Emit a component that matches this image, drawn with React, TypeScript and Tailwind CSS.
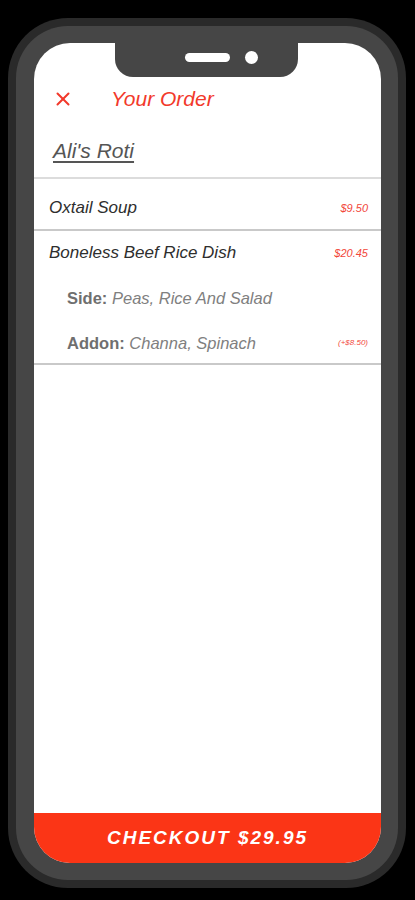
import { X } from "lucide-react";

const font = { fontFamily: "'Liberation Sans', Arial, sans-serif" };

type Line = { label: string; value: string };

interface OrderItemProps {
  name: string;
  price: string;
  lines?: Line[];
  extra?: string;
}

// one item in the order, with optional side / addon lines
const OrderItem = ({ name, price, lines = [], extra }: OrderItemProps) => (
  <div className="flex flex-col border-b-2 border-[#c9c9c9] pb-[8px]">
    <div className="flex h-[24px] items-center justify-between pl-[15px] pr-[13px]">
      <span className="text-[17px] italic text-[#2e2e2e]">{name}</span>
      <span className="text-[11px] italic text-[#f2473a]">{price}</span>
    </div>
    {lines.map((line, i) => (
      <div
        key={line.label}
        className="mt-[21px] flex h-[24px] items-center justify-between pl-[33px] pr-[13px]"
      >
        <span className="text-[16.5px] text-[#6f6f6f]">
          <span className="font-bold">{line.label}:</span>{" "}
          <span className="italic text-[#808080]">{line.value}</span>
        </span>
        {i === lines.length - 1 && extra && (
          <span className="text-[8px] italic text-[#f2473a]">{extra}</span>
        )}
      </div>
    ))}
  </div>
);

export default function App() {
  return (
    <div className="h-[900px] w-[415px] bg-black pl-[8px] pt-[18px]" style={font}>
      {/* Phone frame */}
      <div className="h-[870px] w-[398px] rounded-[60px] bg-[#2a2a2a] p-[8px]">
        <div className="h-full w-full rounded-[52px] bg-[#464646] p-[17px] pl-[18px]">
          <div className="relative flex h-full w-full flex-col overflow-hidden rounded-[36px] bg-white">
            {/* Notch */}
            <div className="absolute left-[81px] top-0 h-[34px] w-[183px] rounded-b-[18px] bg-[#464646]">
              <div className="absolute left-[70px] top-[10px] h-[9px] w-[45px] rounded-full bg-white" />
              <div className="absolute left-[130px] top-[8px] h-[13px] w-[13px] rounded-full bg-white" />
            </div>

            <div className="h-[40px] shrink-0" />

            {/* Header */}
            <div className="flex h-[32px] shrink-0 items-center">
              <X className="ml-[18px] h-[22px] w-[22px] text-[#f2392b]" strokeWidth={2.2} />
              <span className="ml-[37px] text-[21px] italic text-[#f2392b]">Your Order</span>
            </div>

            <div className="h-[62px] shrink-0 pl-[19px] pt-[24px]">
              <span className="text-[21px] italic leading-[24px] text-[#555] underline decoration-[1.5px] underline-offset-[3px]">
                Ali's Roti
              </span>
            </div>

            <div className="h-[2px] shrink-0 bg-[#dcdcdc]" />

            {/* Items */}
            <div className="flex h-[52px] shrink-0 flex-col border-b-2 border-[#c9c9c9] pt-[17px]">
              <div className="flex h-[24px] items-center justify-between pl-[15px] pr-[13px]">
                <span className="text-[17px] italic text-[#2e2e2e]">Oxtail Soup</span>
                <span className="text-[11px] italic text-[#f2473a]">$9.50</span>
              </div>
            </div>

            <div className="shrink-0 pt-[10px]">
              <OrderItem
                name="Boneless Beef Rice Dish"
                price="$20.45"
                lines={[
                  { label: "Side", value: "Peas, Rice And Salad" },
                  { label: "Addon", value: "Channa, Spinach" },
                ]}
                extra="(+$8.50)"
              />
            </div>

            <div className="flex-1" />

            {/* Checkout */}
            <button className="flex h-[50px] shrink-0 items-center justify-center bg-[#fb3516]">
              <span className="text-[19px] font-bold italic tracking-[2px] text-white">
                CHECKOUT $29.95
              </span>
            </button>
          </div>
        </div>
      </div>
    </div>
  );
}
